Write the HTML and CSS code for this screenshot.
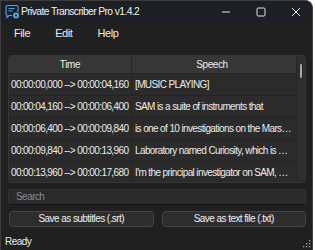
FILE: index.html
```html
<!DOCTYPE html>
<html>
<head>
<meta charset="utf-8">
<link rel="stylesheet" href="styles.css">
</head>
<body>
<div class="window">
  <div class="titlebar">
    <svg class="app-icon" width="15" height="15" viewBox="0 0 15 15">
      <path d="M2.5 1.5h9a1.5 1.5 0 0 1 1.5 1.5v5.5M7 11.5H4l-2 2v-2.2A1.5 1.5 0 0 1 1 9.8V3a1.5 1.5 0 0 1 1.5-1.5" fill="none" stroke="#4ea3f0" stroke-width="1.1"/>
      <path d="M3.5 4.5h6M3.5 6.8h4" stroke="#4ea3f0" stroke-width="1"/>
      <circle cx="11" cy="11.5" r="3" fill="#4ea3f0"/>
      <circle cx="11" cy="11.5" r="1" fill="#1c2024"/>
    </svg>
    <span class="title">Private Transcriber Pro v1.4.2</span>
    <div class="controls">
      <svg width="10" height="10" viewBox="0 0 10 10"><path d="M1 5h8" stroke="#e6e6e6" stroke-width="1"/></svg>
      <svg width="10" height="10" viewBox="0 0 10 10"><rect x="1" y="1" width="8" height="8" rx="1.2" fill="none" stroke="#e6e6e6" stroke-width="1"/></svg>
      <svg width="10" height="10" viewBox="0 0 10 10"><path d="M1 1l8 8M9 1l-8 8" stroke="#e6e6e6" stroke-width="1"/></svg>
    </div>
  </div>
  <div class="menubar">
    <span class="menu-item">File</span>
    <span class="menu-item">Edit</span>
    <span class="menu-item">Help</span>
  </div>
  <div class="content">
    <div class="table">
      <div class="grid">
        <div class="row header">
          <div class="cell time">Time</div>
          <div class="cell speech">Speech</div>
        </div>
        <div class="row">
          <div class="cell time">00:00:00,000 --&gt; 00:00:04,160</div>
          <div class="cell speech">[MUSIC PLAYING]</div>
        </div>
        <div class="row">
          <div class="cell time">00:00:04,160 --&gt; 00:00:06,400</div>
          <div class="cell speech">SAM is a suite of instruments that</div>
        </div>
        <div class="row">
          <div class="cell time">00:00:06,400 --&gt; 00:00:09,840</div>
          <div class="cell speech">is one of 10 investigations on the Mars Science Laboratory</div>
        </div>
        <div class="row">
          <div class="cell time">00:00:09,840 --&gt; 00:00:13,960</div>
          <div class="cell speech">Laboratory named Curiosity, which is on the surface</div>
        </div>
        <div class="row last">
          <div class="cell time">00:00:13,960 --&gt; 00:00:17,680</div>
          <div class="cell speech">I'm the principal investigator on SAM, and</div>
        </div>
      </div>
      <div class="scroll"><div class="thumb"></div></div>
    </div>
    <div class="search">Search</div>
    <div class="buttons">
      <div class="button">Save as subtitles (.srt)</div>
      <div class="button">Save as text file (.txt)</div>
    </div>
  </div>
  <div class="statusbar">
    <span>Ready</span>
    <svg class="grip" width="8" height="8" viewBox="0 0 8 8">
      <rect x="6" y="0" width="1.3" height="1.3" fill="#aaa"/>
      <rect x="3" y="3" width="1.3" height="1.3" fill="#aaa"/>
      <rect x="6" y="3" width="1.3" height="1.3" fill="#aaa"/>
      <rect x="0" y="6" width="1.3" height="1.3" fill="#aaa"/>
      <rect x="3" y="6" width="1.3" height="1.3" fill="#aaa"/>
      <rect x="6" y="6" width="1.3" height="1.3" fill="#aaa"/>
    </svg>
  </div>
</div>
</body>
</html>
```
FILE: styles.css
```css
html, body {
  margin: 0;
  padding: 0;
  background: #ffffff;
}
body {
  width: 315px;
  height: 250px;
  overflow: hidden;
  font-family: "Liberation Sans", Arial, sans-serif;
  font-size: 10px;
  letter-spacing: -0.55px;
  color: #ececec;
}
.window {
  width: 313px;
  height: 250px;
  box-sizing: border-box;
  background: #202020;
  border: 1px solid #3c3c3c;
  border-bottom: none;
  border-radius: 0 8px 0 0;
  overflow: hidden;
  display: flex;
  flex-direction: column;
}
.titlebar {
  height: 21px;
  background: #1c2024;
  display: flex;
  align-items: center;
  padding-left: 4px;
  flex-shrink: 0;
}
.app-icon {
  margin-right: 1px;
  margin-top: -1px;
}
.title {
  font-size: 10.3px;
  letter-spacing: -0.6px;
  color: #f0f0f0;
}
.controls {
  margin-left: auto;
  display: flex;
  align-items: center;
  gap: 25px;
  padding-right: 11px;
}
.controls svg {
  display: block;
}
.menubar {
  height: 22px;
  display: flex;
  align-items: center;
  padding-left: 13px;
  gap: 25px;
  font-size: 11px;
  letter-spacing: -0.4px;
  flex-shrink: 0;
}
.content {
  padding: 11px 6px 0 7px;
  display: flex;
  flex-direction: column;
}
.table {
  height: 128px;
  box-sizing: border-box;
  border: 1px solid #363636;
  border-radius: 4px;
  background: #2b2b2b;
  display: flex;
  overflow: hidden;
}
.grid {
  flex: 1;
  display: flex;
  flex-direction: column;
}
.row {
  display: grid;
  grid-template-columns: 123px 1fr;
  height: 22px;
  box-sizing: border-box;
  border-bottom: 1px solid #232323;
  align-items: center;
}
.row.last {
  border-bottom: none;
}
.row.header {
  height: 18px;
  background: #363636;
  border-bottom: 1px solid #262626;
}
.cell {
  white-space: nowrap;
  overflow: hidden;
  text-overflow: ellipsis;
  padding-left: 3px;
  line-height: 21px;
  height: 21px;
  box-sizing: border-box;
}
.cell.time {
  border-right: 1px solid #262626;
  padding-left: 2px;
  letter-spacing: -0.6px;
  text-overflow: clip;
}
.header .cell {
  text-align: center;
  line-height: 17px;
  height: 17px;
  padding-left: 0;
  letter-spacing: -0.4px;
}
.speech {
  padding-right: 4px;
  letter-spacing: -0.62px;
}
.scroll {
  width: 8px;
  border-left: 1px solid #262626;
  background: #2e2e2e;
  position: relative;
}
.thumb {
  position: absolute;
  left: 3px;
  top: 8px;
  width: 2px;
  height: 14px;
  border-radius: 1px;
  background: #a8a8a8;
}
.search {
  margin-top: 6px;
  height: 16px;
  box-sizing: border-box;
  background: #2a2a2a;
  border: 1px solid #333333;
  border-bottom: 1px solid #161616;
  border-radius: 3px;
  color: #8c8c8c;
  padding-left: 7px;
  line-height: 14px;
}
.buttons {
  margin-top: 6px;
  display: grid;
  grid-template-columns: 1fr 1fr;
  gap: 8px;
  padding-left: 1px;
}
.button {
  height: 16px;
  box-sizing: border-box;
  background: #2d2d2d;
  border: 1px solid #454545;
  border-radius: 4px;
  text-align: center;
  line-height: 14px;
  color: #f0f0f0;
}
.statusbar {
  margin-top: auto;
  height: 15px;
  display: flex;
  align-items: center;
  padding-left: 4px;
  padding-bottom: 1px;
  position: relative;
}
.grip {
  position: absolute;
  right: 1px;
  bottom: 2px;
}
```
